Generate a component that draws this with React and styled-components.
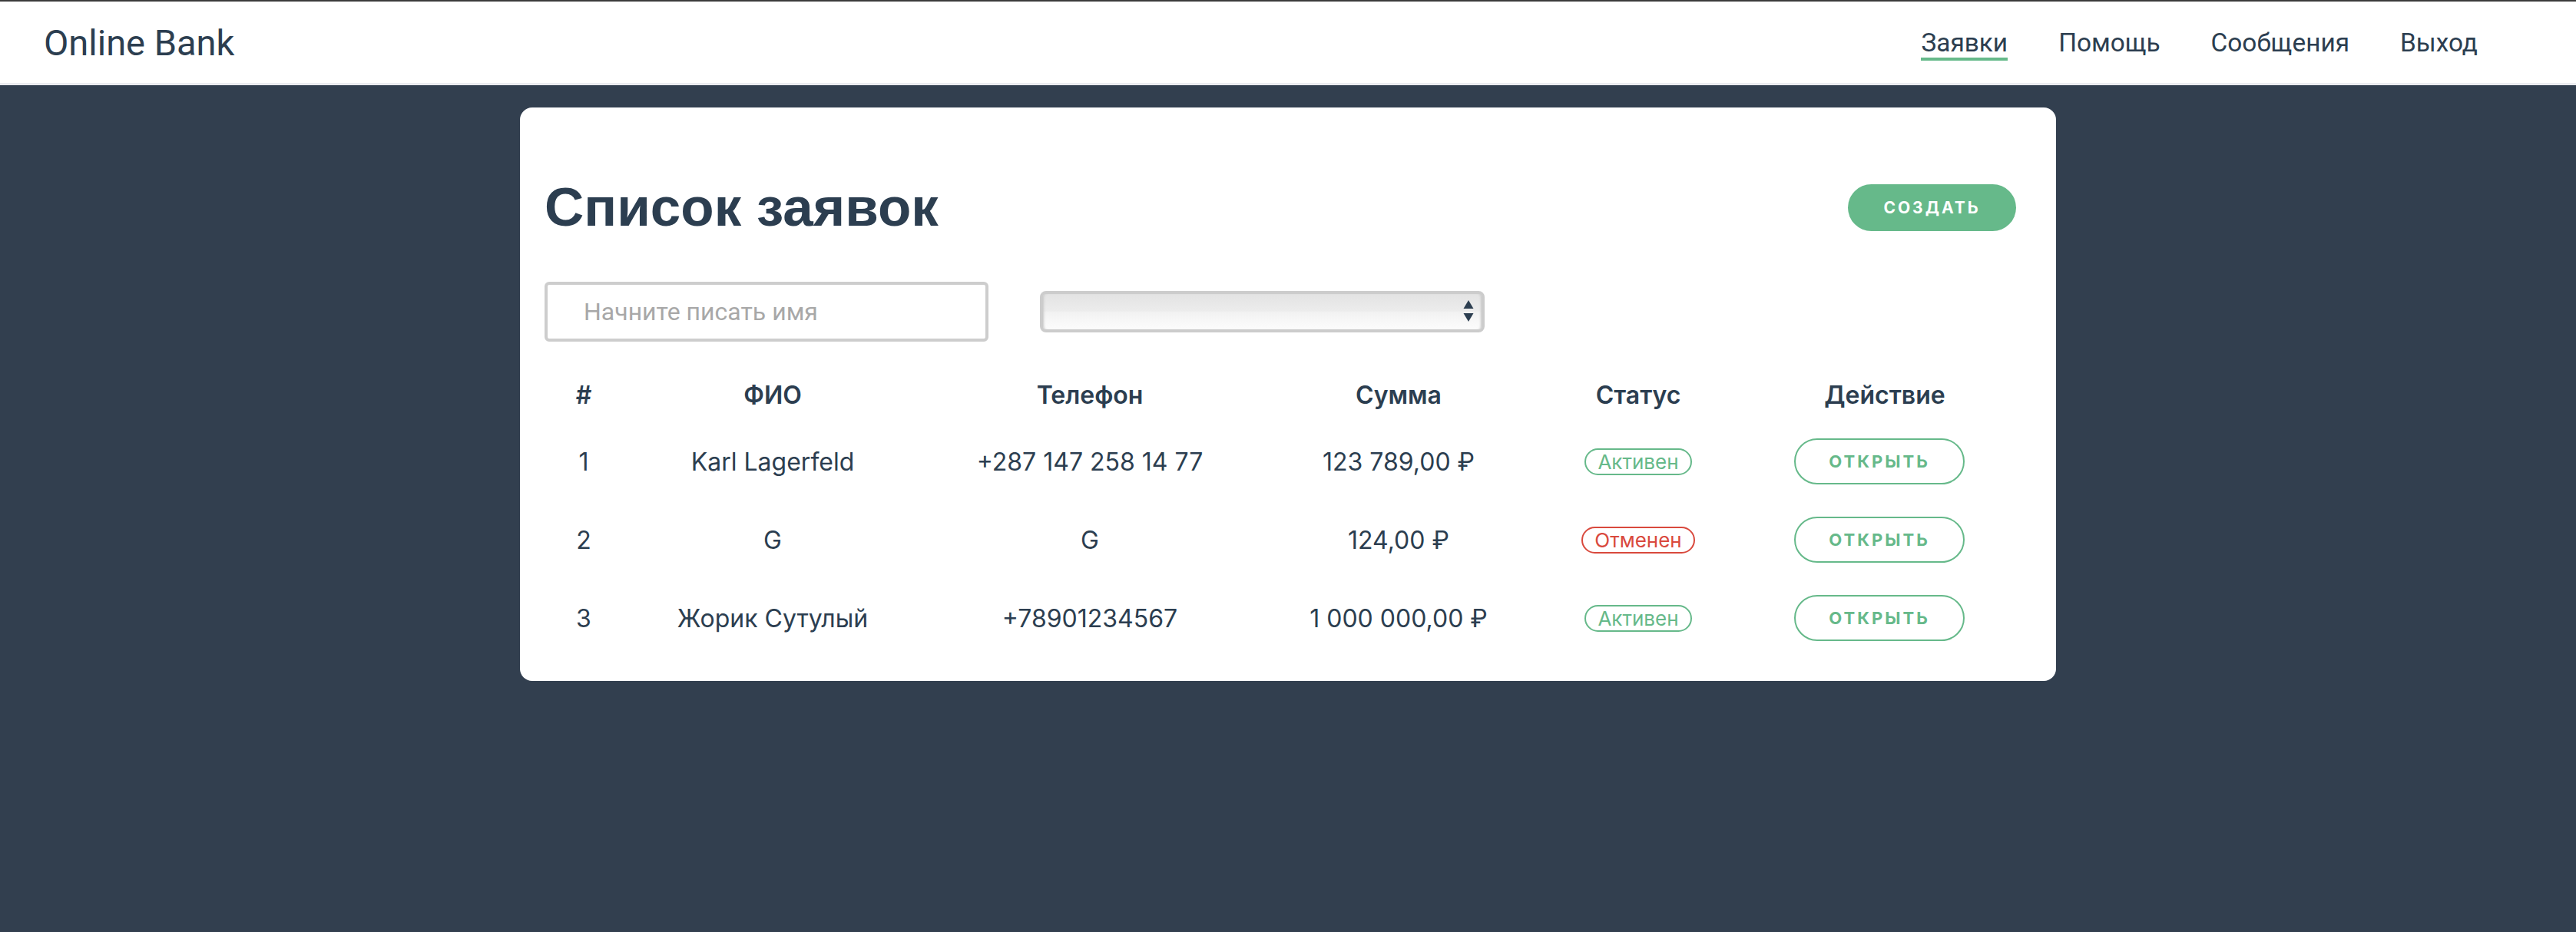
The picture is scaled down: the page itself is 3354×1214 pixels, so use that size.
import React from 'react'
import styled, { createGlobalStyle } from 'styled-components'

const GlobalStyle = createGlobalStyle`
  html, body {
    margin: 0;
    padding: 0;
    background: #323f4f;
    font-family: Inter, "Noto Sans", sans-serif;
    color: #2c3e50;
  }
  #root {
    min-height: 100vh;
  }
`

const Header = styled.header`
  display: flex;
  align-items: center;
  justify-content: space-between;
  height: 106px;
  padding: 0 128px 0 57px;
  background: #fff;
  border-top: 2px solid #3b3b3b;
  border-bottom: 3px solid #ebecf0;
`

const Logo = styled.div`
  font-family: Roboto, "Liberation Sans", sans-serif;
  font-size: 47px;
  color: #2c3e50;
`

const Nav = styled.nav`
  display: flex;
  align-items: center;
  gap: 66px;
`

const NavLink = styled.a`
  font-family: Roboto, "Liberation Sans", sans-serif;
  font-size: 33.4px;
  color: #2c3e50;
  text-decoration: none;
  padding-top: 4px;
  border-bottom: 4px solid ${p => (p.$active ? '#66b98a' : 'transparent')};
  cursor: pointer;
`

const Card = styled.main`
  width: 2000px;
  box-sizing: border-box;
  margin: 29px auto 0;
  padding: 32px 32px 31px 32px;
  background: #fff;
  border-radius: 16px;
`

const TitleRow = styled.div`
  display: flex;
  align-items: center;
  justify-content: space-between;
  padding: 60px 20px 0 0;
`

const Title = styled.h1`
  margin: 0;
  font-family: "Liberation Sans", Arial, sans-serif;
  font-weight: 700;
  font-size: 71px;
  line-height: 76px;
  color: #2c3e50;
`

const CreateButton = styled.button`
  width: 219px;
  height: 61px;
  border: none;
  border-radius: 31px;
  background: #66b98a;
  color: #fff;
  font-family: Inter, sans-serif;
  font-weight: 700;
  font-size: 21px;
  letter-spacing: 3px;
  text-transform: uppercase;
  cursor: pointer;
`

const Filters = styled.div`
  display: flex;
  align-items: center;
  gap: 67px;
  margin-top: 59px;
`

const SearchInput = styled.input`
  width: 578px;
  height: 78px;
  box-sizing: border-box;
  border: 4px solid #cdcdcd;
  border-radius: 6px;
  padding: 0 0 0 47px;
  font-family: Roboto, "Liberation Sans", sans-serif;
  font-size: 32px;
  color: #2c3e50;
  outline: none;

  &::placeholder {
    color: #a8a8a8;
  }
`

const SelectWrap = styled.div`
  position: relative;
  width: 579px;
  height: 54px;
`

const Select = styled.select`
  appearance: none;
  width: 100%;
  height: 100%;
  box-sizing: border-box;
  border: 4px solid #cccccc;
  border-radius: 8px;
  background: linear-gradient(#e3e3e3, #ececec 48%, #f2f2f2 52%, #fcfcfc);
  box-shadow: inset 3px 0 3px -2px #c8c8c8, inset -3px 0 3px -2px #c8c8c8;
  font-size: 26px;
  outline: none;
`

const Arrows = styled.svg`
  position: absolute;
  right: 14px;
  top: 11px;
  pointer-events: none;
`

const Table = styled.div`
  margin-top: 33px;
`

const Row = styled.div`
  display: grid;
  grid-template-columns: 102px 390px 436px 368px 256px 386px;
  align-items: center;
  height: ${p => (p.$head ? '72px' : '102px')};
  font-size: 32px;
  font-weight: ${p => (p.$head ? 600 : 400)};
  text-align: center;
  color: #2c3e50;
`

const Cell = styled.div`
  display: flex;
  justify-content: center;
  align-items: center;
  white-space: nowrap;
`

const Badge = styled.span`
  display: inline-block;
  padding: 0 15px;
  line-height: 31px;
  font-size: 26px;
  border-radius: 18px;
  border: 2px solid ${p => (p.$cancel ? '#d9493d' : '#66b98a')};
  color: ${p => (p.$cancel ? '#d9493d' : '#66b98a')};
`

const OpenButton = styled.button`
  width: 222px;
  height: 60px;
  margin-right: 14px;
  box-sizing: border-box;
  border: 2px solid #66b98a;
  border-radius: 30px;
  background: #fff;
  color: #66b98a;
  font-family: Inter, sans-serif;
  font-weight: 700;
  font-size: 22px;
  letter-spacing: 3px;
  text-transform: uppercase;
  cursor: pointer;
`

const rows = [
  { id: 1, name: 'Karl Lagerfeld', phone: '+287 147 258 14 77', sum: '123 789,00 ₽', status: 'Активен' },
  { id: 2, name: 'G', phone: 'G', sum: '124,00 ₽', status: 'Отменен' },
  { id: 3, name: 'Жорик Сутулый', phone: '+78901234567', sum: '1 000 000,00 ₽', status: 'Активен' },
]

export default function App() {
  return (
    <>
      <GlobalStyle />
      <Header>
        <Logo>Online Bank</Logo>
        <Nav>
          <NavLink $active>Заявки</NavLink>
          <NavLink>Помощь</NavLink>
          <NavLink>Сообщения</NavLink>
          <NavLink>Выход</NavLink>
        </Nav>
      </Header>

      <Card>
        <TitleRow>
          <Title>Список заявок</Title>
          <CreateButton>Создать</CreateButton>
        </TitleRow>

        <Filters>
          <SearchInput placeholder="Начните писать имя" />
          <SelectWrap>
            <Select defaultValue="">
              <option value=""></option>
              <option value="active">Активен</option>
              <option value="cancel">Отменен</option>
            </Select>
            <Arrows width="14" height="30" viewBox="0 0 14 30">
              <path d="M7 1 L13.5 12 L0.5 12 Z" fill="#2c3e50" />
              <path d="M0.5 18 L13.5 18 L7 29 Z" fill="#2c3e50" />
            </Arrows>
          </SelectWrap>
        </Filters>

        <Table>
          <Row $head>
            <Cell>#</Cell>
            <Cell>ФИО</Cell>
            <Cell>Телефон</Cell>
            <Cell>Сумма</Cell>
            <Cell>Статус</Cell>
            <Cell>Действие</Cell>
          </Row>
          {rows.map(r => (
            <Row key={r.id}>
              <Cell>{r.id}</Cell>
              <Cell>{r.name}</Cell>
              <Cell>{r.phone}</Cell>
              <Cell>{r.sum}</Cell>
              <Cell>
                <Badge $cancel={r.status === 'Отменен'}>{r.status}</Badge>
              </Cell>
              <Cell>
                <OpenButton>Открыть</OpenButton>
              </Cell>
            </Row>
          ))}
        </Table>
      </Card>
    </>
  )
}
